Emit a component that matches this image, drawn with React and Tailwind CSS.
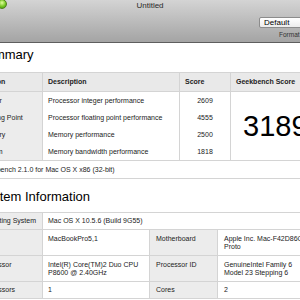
export default function App() {
  const rows = [
    ["Integer", "Processor integer performance", "2609"],
    ["Floating Point", "Processor floating point performance", "4555"],
    ["Memory", "Memory performance", "2500"],
    ["Stream", "Memory bandwidth performance", "1818"],
  ];

  return (
    <div className="relative w-[300px] h-[300px] overflow-hidden bg-white font-['Liberation_Sans',Arial,sans-serif] text-[#222]">
      {/* window title bar + toolbar */}
      <div className="relative h-[43px] w-[340px] border-b border-[#5e5e5e] bg-gradient-to-b from-[#d4d4d4] to-[#a4a4a4]">
        <div className="absolute -left-[3px] -top-[1px] w-[10px] h-[10px] rounded-full border border-[#4f7f1c] bg-[radial-gradient(circle_at_50%_35%,#e2ff9c,#76c723_55%,#3f8c0d)]" />
        <div className="w-[300px] pt-[1px] text-center text-[8px] leading-[9px] text-[#2a2a2a]">
          Untitled
        </div>
        <div className="ml-[259px] mt-[7px] w-[70px] h-[11px] rounded-[2px] border border-[#8c8c8c] bg-gradient-to-b from-white to-[#ececec] pl-[4px] text-[8px] leading-[9px] text-black">
          Default
        </div>
        <div className="ml-[279px] mt-[3px] text-[6.5px] leading-[8px] text-[#333]">
          Format
        </div>
      </div>

      <div className="-ml-[25px] w-[400px]">
        {/* Summary */}
        <h1 className="mt-[4px] pl-[3px] text-[13px] leading-[15px] font-normal text-black">
          Summary
        </h1>

        <div className="mt-[10px] grid grid-cols-[68px_137px_51px_144px] border-t border-[#d4d4d4] text-[7px] leading-[8px]">
          <div className="h-[19px] flex items-center px-[5px] bg-[#e9e9e9] border-b border-r border-[#d4d4d4] font-bold">Section</div>
          <div className="h-[19px] flex items-center px-[5px] bg-[#e9e9e9] border-b border-r border-[#d4d4d4] font-bold">Description</div>
          <div className="h-[19px] flex items-center px-[5px] bg-[#e9e9e9] border-b border-r border-[#d4d4d4] font-bold">Score</div>
          <div className="h-[19px] flex items-center px-[5px] bg-[#e9e9e9] border-b border-[#d4d4d4] font-bold">Geekbench Score</div>

          {rows.map((r, i) => (
            <div key={r[0]} className="contents">
              <div className="h-[17px] flex items-center px-[5px] bg-[#ececec] border-r border-[#d4d4d4]">{r[0]}</div>
              <div className="h-[17px] flex items-center px-[5px] border-r border-[#d4d4d4]">{r[1]}</div>
              <div className="h-[17px] flex items-center justify-center border-r border-[#d4d4d4]">{r[2]}</div>
              {i === 0 && (
                <div className="row-span-4 flex items-center pl-[12px] text-[29px] leading-[30px] text-black">
                  3189
                </div>
              )}
            </div>
          ))}

          <div className="col-span-4 h-[19px] flex items-center px-[5px] border-t border-b border-[#d4d4d4]">
            Geekbench 2.1.0 for Mac OS X x86 (32-bit)
          </div>
        </div>

        {/* System Information */}
        <h1 className="mt-[10px] pl-[3px] text-[13px] leading-[15px] font-normal text-black">
          System Information
        </h1>

        <div className="mt-[8px] grid grid-cols-[68px_107px_68px_157px] border-t border-[#d4d4d4] text-[7px] leading-[8px]">
          <div className="h-[17px] pt-[4px] px-[5px] bg-[#ececec] border-b border-r border-[#d4d4d4]">Operating System</div>
          <div className="col-span-3 h-[17px] pt-[4px] px-[5px] border-b border-[#d4d4d4]">Mac OS X 10.5.6 (Build 9G55)</div>

          <div className="h-[26px] pt-[5px] px-[5px] bg-[#ececec] border-b border-r border-[#d4d4d4]">Model</div>
          <div className="h-[26px] pt-[5px] px-[5px] border-b border-r border-[#d4d4d4]">MacBookPro5,1</div>
          <div className="h-[26px] pt-[5px] px-[6px] bg-[#ececec] border-b border-r border-[#d4d4d4]">Motherboard</div>
          <div className="h-[26px] pt-[5px] px-[6px] border-b border-[#d4d4d4]">
            Apple Inc. Mac-F42D86C8
            <br />
            Proto
          </div>

          <div className="h-[26px] pt-[5px] px-[5px] bg-[#ececec] border-b border-r border-[#d4d4d4]">Processor</div>
          <div className="h-[26px] pt-[5px] px-[5px] border-b border-r border-[#d4d4d4]">
            Intel(R) Core(TM)2 Duo CPU
            <br />
            P8600 @ 2.40GHz
          </div>
          <div className="h-[26px] pt-[5px] px-[6px] bg-[#ececec] border-b border-r border-[#d4d4d4]">Processor ID</div>
          <div className="h-[26px] pt-[5px] px-[6px] border-b border-[#d4d4d4]">
            GenuineIntel Family 6
            <br />
            Model 23 Stepping 6
          </div>

          <div className="h-[17px] pt-[4px] px-[5px] bg-[#ececec] border-b border-r border-[#d4d4d4]">Processors</div>
          <div className="h-[17px] pt-[4px] px-[5px] border-b border-r border-[#d4d4d4]">1</div>
          <div className="h-[17px] pt-[4px] px-[6px] bg-[#ececec] border-b border-r border-[#d4d4d4]">Cores</div>
          <div className="h-[17px] pt-[4px] px-[6px] border-b border-[#d4d4d4]">2</div>
        </div>
      </div>
    </div>
  );
}
